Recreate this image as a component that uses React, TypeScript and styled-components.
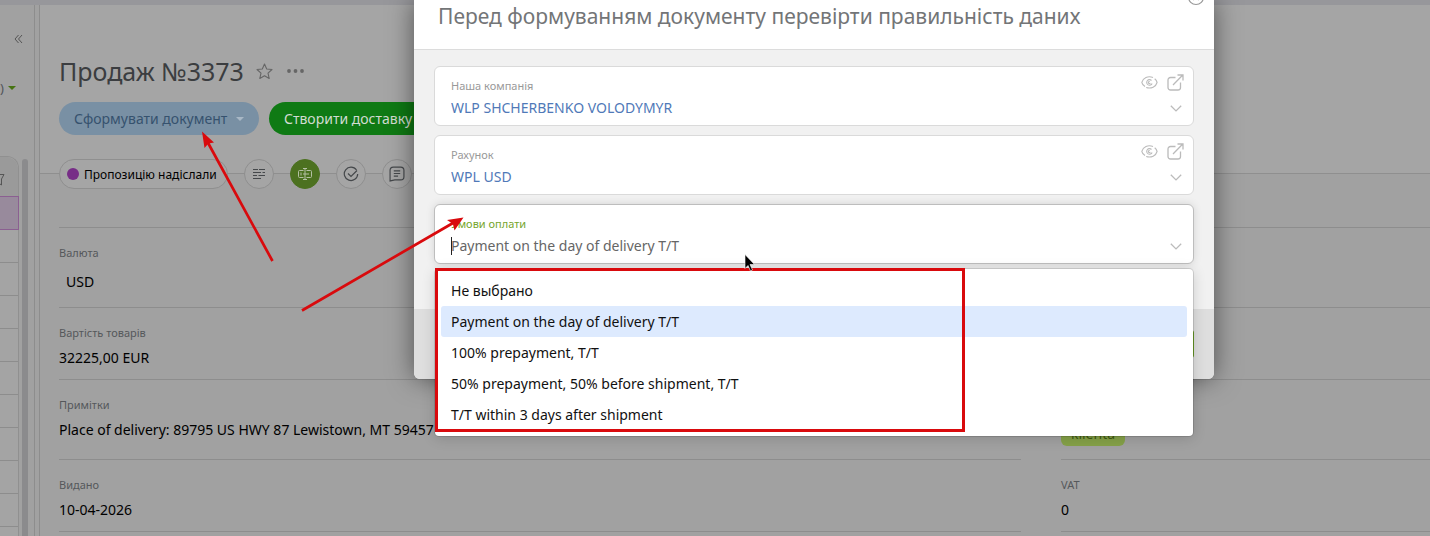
import React from "react";
import styled, { createGlobalStyle, css } from "styled-components";

const Global = createGlobalStyle`
  *, *::before, *::after { box-sizing: border-box; }
  body { margin: 0; background: #a1a1a1; overflow: hidden; font-family: "Noto Sans", "Open Sans", sans-serif; font-size: 14px; color: #000; }
  button, input { font: inherit; }
  button { cursor: pointer; }
`;

const Page = styled.div`
  position: relative;
  display: flex;
  flex-direction: column;
  min-height: 100vh;
  overflow: hidden;
`;

const TopBar = styled.div`
  height: 5px;
  flex: none;
  background: #97979b;
`;

const Workspace = styled.div`
  flex: 1;
  display: flex;
  height: calc(100vh - 5px);
  overflow: hidden;
`;

const Sidebar = styled.aside`
  flex: none;
  width: 35px;
  border-right: 1px solid #8d8d8d;
  display: flex;
  flex-direction: column;
  overflow: hidden;
`;

const CollapseButton = styled.button`
  border: 0;
  padding: 0;
  margin: 28px 12px 0 14px;
  background: none;
  height: 12px;
  width: 9px;
  color: #555;
  display: flex;
`;

const Counter = styled.div`
  display: flex;
  align-items: center;
  gap: 4px;
  height: 20px;
  margin-top: 33px;
  color: #50545a;
  font-size: 13px;
  line-height: 20px;
`;

const Caret = styled.span<{ $color: string }>`
  border: 4px solid transparent;
  border-top-color: ${(p) => p.$color};
  border-bottom: 0;
`;

const ListArea = styled.div`
  flex: 1;
  display: flex;
  gap: 3px;
  margin-top: 58px;
`;

const List = styled.div`
  width: 19px;
  border: 1px solid #909090;
  border-width: 1px 1px 0 0;
  border-radius: 0 12px 0 0;
  background: #a4a4a4;
`;

const ListHead = styled.div`
  height: 39px;
  background: #9a9a9a;
  border-radius: 0 12px 0 0;
  padding-top: 15px;
  color: #555;
`;

const ListRow = styled.div<{ $selected?: boolean }>`
  height: 33px;
  border-bottom: 1px solid #8d8d8d;
  ${(p) =>
    p.$selected &&
    css`
      height: 34px;
      margin-right: -1px;
      background: #988a9c;
      border: 1px solid #8b5f91;
      border-left: 0;
    `}
`;

const Scrollbar = styled.div`
  width: 6px;
  margin-top: 3px;
  border-radius: 3px 3px 0 0;
  background: #8b8b8d;
`;

const Main = styled.main`
  flex: 1;
  min-width: 0;
  margin-left: 4px;
  border-left: 1px solid #8d8d8d;
`;

const MainHeader = styled.header`
  background: #a5a5a5;
  padding: 48px 19px 24px;
`;

const TitleRow = styled.div`
  display: flex;
  align-items: center;
  height: 36px;
  gap: 12px;
  color: #666;
`;

const Title = styled.h1`
  margin: 0;
  font-size: 25px;
  line-height: 36px;
  font-weight: 400;
  color: #3b3d40;
`;

const IconButton = styled.button`
  border: 0;
  padding: 0;
  background: none;
  color: inherit;
  display: flex;
`;

const Actions = styled.div`
  display: flex;
  gap: 10px;
  margin-top: 13px;
`;

const Action = styled.button<{ $primary?: boolean }>`
  display: flex;
  align-items: center;
  justify-content: space-between;
  flex: none;
  width: 200px;
  height: 33px;
  padding: 0 15px;
  border: 0;
  border-radius: 17px;
  white-space: nowrap;
  background: ${(p) => (p.$primary ? "#0f7a14" : "#7990a4")};
  color: ${(p) => (p.$primary ? "#d2dcd2" : "#36526e")};
`;

const Steps = styled.div`
  display: flex;
  gap: 16px;
  padding-left: 19px;
  background: linear-gradient(#a5a5a5 0 14px, #8f8f8f 14px 15px, #a1a1a1 15px);
`;

const Step = styled.button<{ $active?: boolean }>`
  display: flex;
  align-items: center;
  justify-content: center;
  width: 30px;
  height: 30px;
  padding: 0;
  border: 1px solid ${(p) => (p.$active ? "#4c7120" : "#8f8f8f")};
  border-radius: 15px;
  background: ${(p) => (p.$active ? "#4c7120" : "#a5a5a5")};
  color: ${(p) => (p.$active ? "#b4c0a4" : "#45484b")};
`;

const StageStep = styled(Step)`
  width: 169px;
  gap: 5px;
  justify-content: flex-start;
  padding-left: 7px;
  color: #000;
  font-size: 12px;
  white-space: nowrap;
`;

const Dot = styled.span`
  width: 12px;
  height: 12px;
  flex: none;
  border-radius: 50%;
  background: #772d87;
`;

const Columns = styled.div`
  display: grid;
  grid-template-columns: minmax(0, 962fr) minmax(0, 369fr);
  gap: 40px;
  padding-left: 19px;
  padding-top: 38px;
`;

const Details = styled.dl`
  margin: 0;
  border-top: 1px solid #8d8d8d;
`;

const Detail = styled.div<{ $tall?: boolean }>`
  height: ${(p) => (p.$tall ? 80 : 72)}px;
  padding-top: 16px;
  border-bottom: 1px solid #8d8d8d;
`;

const Term = styled.dt`
  font-size: 11px;
  line-height: 18px;
  color: #55585b;
`;

const Value = styled.dd<{ $inset?: boolean }>`
  margin: ${(p) => (p.$inset ? "9px 0 0 7px" : "5px 0 0")};
  line-height: 22px;
  white-space: nowrap;
`;

const Tag = styled.span`
  display: block;
  width: 64px;
  height: 24px;
  margin-top: 8px;
  border-radius: 6px;
  background: #85a148;
  color: #3f5a10;
  text-align: center;
  line-height: 24px;
`;

const Overlay = styled.div`
  position: absolute;
  inset: 0;
  display: flex;
  justify-content: center;
  align-items: flex-start;
  padding-left: 198px;
`;

const Dialog = styled.section`
  width: 800px;
  max-width: 100%;
  border-radius: 0 0 6px 6px;
  background: #f1f1f1;
  box-shadow: 0 0 26px rgba(0, 0, 0, 0.5);
`;

const DialogHeader = styled.header`
  position: relative;
  height: 50px;
  padding: 0 24px;
  background: #fff;
  border-bottom: 1px solid #dcdcdc;
`;

const DialogTitle = styled.h2`
  margin: 0;
  font-size: 21px;
  line-height: 32px;
  font-weight: 400;
  color: #737577;
`;

const CloseButton = styled(IconButton)`
  position: absolute;
  top: -12px;
  right: 9px;
  color: #999;
`;

const DialogBody = styled.div`
  display: flex;
  flex-direction: column;
  gap: 9px;
  padding: 16px 20px 45px;
`;

const DialogFooter = styled.footer`
  display: flex;
  justify-content: flex-end;
  padding: 21px 20px;
  background: #dedede;
  border-radius: 0 0 6px 6px;
`;

const Submit = styled.button`
  width: 110px;
  height: 28px;
  border: 0;
  border-radius: 3px;
  background: #6da026;
`;

const Field = styled.div<{ $focused?: boolean }>`
  position: relative;
  display: flex;
  height: 60px;
  padding: 0 9px 0 16px;
  border: 1px solid ${(p) => (p.$focused ? "#bdbdbd" : "#dadada")};
  border-radius: 6px;
  background: #fff;
  box-shadow: ${(p) => (p.$focused ? "0 0 8px rgba(0, 0, 0, 0.12)" : "none")};
`;

const FieldText = styled.div`
  flex: 1;
  display: flex;
  flex-direction: column;
  padding-top: 10px;
`;

const FieldLabel = styled.label<{ $focused?: boolean }>`
  font-size: 11px;
  line-height: 18px;
  color: ${(p) => (p.$focused ? "#76a52c" : "#999")};
`;

const FieldInput = styled.input<{ $link?: boolean }>`
  width: 100%;
  height: 24px;
  padding: 0;
  border: 0;
  outline: 0;
  background: none;
  color: ${(p) => (p.$link ? "#5079b8" : "#666")};
`;

const TextCursor = styled.span`
  position: absolute;
  left: 16px;
  top: 32px;
  width: 1px;
  height: 18px;
  background: #222;
`;

const FieldTools = styled.div`
  display: flex;
  flex-direction: column;
  align-items: flex-end;
  gap: 14px;
  padding-top: 7px;
  color: #bbb;
`;

const ToolRow = styled.div`
  display: flex;
  align-items: center;
  height: 17px;
  gap: 9px;
`;

const Chevron = styled(IconButton)`
  margin-right: 2px;
`;

const Menu = styled.ul`
  position: absolute;
  top: 64px;
  left: 0;
  right: 0;
  margin: 0;
  padding: 6px;
  list-style: none;
  background: #fff;
  border-radius: 4px;
  box-shadow: 0 0 0 1px rgba(0, 0, 0, 0.12), 0 2px 14px rgba(0, 0, 0, 0.16);
`;

const Option = styled.li<{ $selected?: boolean }>`
  padding: 0 10px;
  border-radius: 3px;
  line-height: 31px;
  color: #111;
  background: ${(p) => (p.$selected ? "#ddeafe" : "transparent")};
`;

const Highlight = styled.div`
  position: absolute;
  top: 63px;
  left: 0;
  width: 530px;
  height: 164px;
  border: 3px solid #d90a0d;
`;

const Annotations = styled.svg`
  position: absolute;
  top: 0;
  left: 0;
  pointer-events: none;
`;

const stroke = { fill: "none", stroke: "currentColor" } as const;

const Eye = () => (
  <svg width="17" height="13" viewBox="0 0 17 13" {...stroke} strokeWidth="1.1" aria-hidden="true">
    <path d="M12 1.500C7-.7 2 2 .8 6.300c.4 1.900 1.500 3.200 3.200 4.200M5.200 11.500c5 1.500 9.800-.8 10.900-5-.4-1.700-1.100-2.800-2.400-3.800" />
    <path d="M10.500 4.500a2.800 2.800 0 1 0 .6 3M8.700 5.600a1 1 0 1 0 .6 1.300" />
  </svg>
);

const External = () => (
  <svg width="17" height="17" viewBox="0 0 17 17" {...stroke} strokeWidth="1.3" aria-hidden="true">
    <path d="M8.500 3.500H3.500a2.500 2.500 0 0 0-2.500 2.500v7.500A2.500 2.500 0 0 0 3.500 16h7.500a2.500 2.500 0 0 0 2.500-2.500V8.500M6 11 15.500 1.300M10.500 1H16v5.500" />
  </svg>
);

const Down = () => (
  <svg width="12" height="7" viewBox="0 0 12 7" {...stroke} strokeWidth="1.300" aria-hidden="true">
    <path d="m.8.7 5.200 5.200L11.200.7" />
  </svg>
);

type SelectFieldProps = { id: string; label: string; value: string; link?: boolean; focused?: boolean; children?: React.ReactNode };

const SelectField = ({ id, label, value, link, focused, children }: SelectFieldProps) => (
  <Field $focused={focused}>
    <FieldText>
      <FieldLabel htmlFor={id} $focused={focused}>{label}</FieldLabel>
      <FieldInput id={id} defaultValue={value} $link={link} />
    </FieldText>
    <FieldTools>
      <ToolRow>
        {link && (
          <>
            <IconButton aria-label="Переглянути"><Eye /></IconButton>
            <IconButton aria-label="Відкрити"><External /></IconButton>
          </>
        )}
      </ToolRow>
      <Chevron aria-label="Розгорнути"><Down /></Chevron>
    </FieldTools>
    {children}
  </Field>
);

const options = [
  "Не выбрано",
  "Payment on the day of delivery T/T",
  "100% prepayment, T/T",
  "50% prepayment, 50% before shipment, T/T",
  "T/T within 3 days after shipment",
];

export default function App() {
  return (
    <Page>
      <Global />
      <TopBar />
      <Workspace>
        <Sidebar>
          <CollapseButton aria-label="Згорнути">
            <svg width="9" height="12" viewBox="0 0 9 12" {...stroke} aria-hidden="true">
              <path d="M4.500 2 1 6l3.500 4M8 2 4.500 6 8 10" />
            </svg>
          </CollapseButton>
          <Counter>)<Caret $color="#467312" /></Counter>
          <ListArea>
            <List>
              <ListHead>
                <svg width="5" height="14" viewBox="0 0 5 14" {...stroke} aria-hidden="true">
                  <path d="M0 1.500h4L1.500 6v6L0 11" />
                </svg>
              </ListHead>
              <ListRow $selected />
              {Array.from({ length: 10 }, (_, i) => <ListRow key={i} />)}
            </List>
            <Scrollbar />
          </ListArea>
        </Sidebar>
        <Main>
          <MainHeader>
            <TitleRow>
              <Title>Продаж №3373</Title>
              <IconButton aria-label="Обране">
                <svg width="17" height="17" viewBox="0 0 17 17" {...stroke} strokeWidth="1.1" strokeLinejoin="round" aria-hidden="true">
                  <path d="m8.500 1 2.200 5 5.300.5-4 3.600 1.200 5.400-4.700-2.800-4.700 2.800L5 10.100 1 6.500 6.300 6z" />
                </svg>
              </IconButton>
              <IconButton aria-label="Ще">
                <svg width="20" height="4" viewBox="0 0 20 4" fill="currentColor" aria-hidden="true">
                  <circle cx="4" cy="2" r="1.900" /><circle cx="10.500" cy="2" r="1.900" /><circle cx="17" cy="2" r="1.900" />
                </svg>
              </IconButton>
            </TitleRow>
            <Actions>
              <Action>Сформувати документ<Caret $color="#a9b8c6" /></Action>
              <Action $primary>Створити доставку</Action>
            </Actions>
          </MainHeader>
          <Steps>
            <StageStep><Dot />Пропозицію надіслали</StageStep>
            <Step aria-label="Опис">
              <svg width="14" height="12" viewBox="0 0 14 12" {...stroke} aria-hidden="true">
                <path d="M1 1.500h5M7 1.500h6M1 4.500h8M10.500 4.500H13M1 7.500h4M6.500 7.500H13M1 10.500h8" />
              </svg>
            </Step>
            <Step $active aria-label="Поле">
              <svg width="16" height="14" viewBox="0 0 16 14" {...stroke} aria-hidden="true">
                <path d="M6.500 3.500H2.500a1 1 0 0 0-1 1v5a1 1 0 0 0 1 1h4M9.500 3.500h4a1 1 0 0 1 1 1v5a1 1 0 0 1-1 1h-4M8 1.500v11M6 1.500h4M6 12.500h4M4 5.500v3M6 7h6" />
              </svg>
            </Step>
            <Step aria-label="Завдання">
              <svg width="16" height="16" viewBox="0 0 16 16" {...stroke} strokeWidth="1.200" aria-hidden="true">
                <path d="M13.500 4A6.700 6.700 0 1 0 14.700 8M5 7.500 8 10.500l6-6" />
              </svg>
            </Step>
            <Step aria-label="Коментар">
              <svg width="16" height="16" viewBox="0 0 15 15" {...stroke} strokeWidth="1.100" aria-hidden="true">
                <path d="M1 14V4a3 3 0 0 1 3-3h7a3 3 0 0 1 3 3v6a3 3 0 0 1-3 3H5.500L1 14zM4.500 4.500h6M4.500 7h6M4.500 9.500h4" />
              </svg>
            </Step>
          </Steps>
          <Columns>
            <Details>
              <Detail $tall><Term>Валюта</Term><Value $inset>USD</Value></Detail>
              <Detail><Term>Вартість товарів</Term><Value>32225,00 EUR</Value></Detail>
              <Detail $tall><Term>Примітки</Term><Value>Place of delivery: 89795 US HWY 87 Lewistown, MT 59457</Value></Detail>
              <Detail><Term>Видано</Term><Value>10-04-2026</Value></Detail>
            </Details>
            <Details>
              <Detail $tall />
              <Detail />
              <Detail $tall><Term>Статус</Term><Value><Tag>klienta</Tag></Value></Detail>
              <Detail><Term>VAT</Term><Value>0</Value></Detail>
            </Details>
          </Columns>
        </Main>
      </Workspace>
      <Overlay>
        <Dialog role="dialog" aria-labelledby="dialog-title">
          <DialogHeader>
            <DialogTitle id="dialog-title">Перед формуванням документу перевірти правильність даних</DialogTitle>
            <CloseButton aria-label="Закрити">
              <svg width="18" height="18" viewBox="0 0 18 18" {...stroke} strokeWidth="1.200" aria-hidden="true">
                <circle cx="9" cy="9" r="7.500" /><path d="m6 6 6 6M12 6l-6 6" />
              </svg>
            </CloseButton>
          </DialogHeader>
          <DialogBody>
            <SelectField id="company" label="Наша компанія" value="WLP SHCHERBENKO VOLODYMYR" link />
            <SelectField id="account" label="Рахунок" value="WPL USD" link />
            <SelectField id="terms" label="Умови оплати" value="Payment on the day of delivery T/T" focused>
              <TextCursor />
              <Menu role="listbox">
                {options.map((o, i) => (
                  <Option key={o} role="option" aria-selected={i === 1} $selected={i === 1}>{o}</Option>
                ))}
              </Menu>
              <Highlight />
            </SelectField>
          </DialogBody>
          <DialogFooter><Submit aria-label="Підтвердити" /></DialogFooter>
        </Dialog>
      </Overlay>
      <Annotations width="1430" height="536" viewBox="0 0 1430 536" aria-hidden="true">
        <g stroke="#d90a0d" strokeWidth="2.700" fill="#d90a0d">
          <path d="M272.500 261 207 141M302 310.500 453 223" />
          <path stroke="none" d="M202 131.500 214 142.500 208.500 143.500 204.500 148zM463.500 217.500 454.500 230.500 453 224 447 220z" />
        </g>
        <path d="M745 254.500v14l3-3 2.500 5.500 2-1-2.500-5.500h4.500z" fill="#000" stroke="#fff" strokeWidth=".6" />
      </Annotations>
    </Page>
  );
}
